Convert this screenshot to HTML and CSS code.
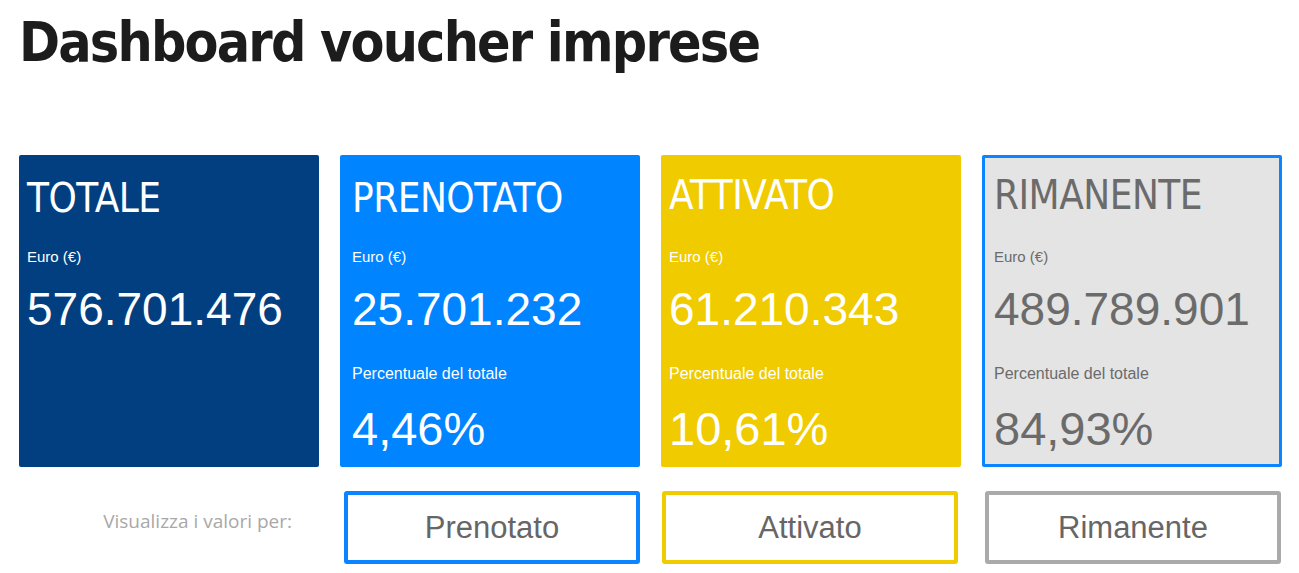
FILE: index.html
```html
<!DOCTYPE html>
<html lang="it">
<head>
<meta charset="utf-8">
<title>Dashboard voucher imprese</title>
<link rel="stylesheet" href="styles.css">
</head>
<body>
<main class="page">
  <h1 class="title">Dashboard voucher imprese</h1>
  <section class="cards">
    <div class="card card-total">
      <div class="card-title">TOTALE</div>
      <div class="card-label">Euro (€)</div>
      <div class="card-value">576.701.476</div>
    </div>
    <div class="card card-booked">
      <div class="card-title">PRENOTATO</div>
      <div class="card-label">Euro (€)</div>
      <div class="card-value">25.701.232</div>
      <div class="card-label card-label-pct">Percentuale del totale</div>
      <div class="card-value card-value-pct">4,46%</div>
    </div>
    <div class="card card-active">
      <div class="card-title">ATTIVATO</div>
      <div class="card-label">Euro (€)</div>
      <div class="card-value">61.210.343</div>
      <div class="card-label card-label-pct">Percentuale del totale</div>
      <div class="card-value card-value-pct">10,61%</div>
    </div>
    <div class="card card-rest">
      <div class="card-title">RIMANENTE</div>
      <div class="card-label">Euro (€)</div>
      <div class="card-value">489.789.901</div>
      <div class="card-label card-label-pct">Percentuale del totale</div>
      <div class="card-value card-value-pct">84,93%</div>
    </div>
  </section>
  <section class="filters">
    <div class="filter-label">Visualizza i valori per:</div>
    <button class="filter-btn btn-booked">Prenotato</button>
    <button class="filter-btn btn-active">Attivato</button>
    <button class="filter-btn btn-rest">Rimanente</button>
  </section>
</main>
</body>
</html>
```

FILE: styles.css
```css
* { box-sizing: border-box; }
html, body { margin: 0; padding: 0; background: #ffffff; }
body { font-family: "Liberation Sans", Arial, sans-serif; color: #1c1c1c; }

.page { padding: 0 0 0 19px; }

.title {
  margin: 0;
  padding-top: 14px;
  font-family: "DejaVu Sans Condensed", "Liberation Sans", sans-serif;
  font-weight: 700;
  font-size: 55px;
  line-height: 56px;
  letter-spacing: -1.8px;
  color: #1c1c1c;
}

.cards {
  margin-top: 85px;
  display: grid;
  grid-template-columns: repeat(4, 300px);
  column-gap: 21px;
}

.card {
  height: 312px;
  border-radius: 2px;
  padding: 23px 8px 0 8px;
  color: #ffffff;
}
.card-total { background: #023f81; }
.card-booked { background: #0084ff; padding-left: 12px; }
.card-active { background: #f0cb00; padding-top: 20px; }
.card-rest {
  background: #e4e4e4;
  border: 3px solid #0a84ff;
  color: #6b6b6b;
  padding: 17px 8px 0 9px;
}

.card-title {
  font-family: "DejaVu Sans Condensed", "Liberation Sans", sans-serif;
  font-size: 40px;
  line-height: 40px;
  letter-spacing: -0.5px;
}
.card-label {
  margin-top: 31px;
  font-size: 15px;
  line-height: 15px;
}
.card-active .card-label, .card-rest .card-label { margin-top: 34px; }
.card-value {
  margin-top: 22px;
  font-size: 46px;
  line-height: 46px;
}
.card-label-pct {
  font-size: 16px;
  line-height: 16px;
}
.card .card-label-pct { margin-top: 34px; }
.card .card-value-pct {
  margin-top: 23px;
  font-size: 47px;
  line-height: 47px;
}

.filters {
  margin-top: 24px;
  display: grid;
  grid-template-columns: repeat(4, 300px);
  column-gap: 21px;
  align-items: center;
}
.filter-label {
  justify-self: end;
  padding-right: 27px;
  font-family: "Open Sans", sans-serif;
  font-size: 19px;
  color: #a8a8a8;
  margin-top: -14px;
}
.filter-btn {
  width: 296px;
  height: 73px;
  background: #ffffff;
  border: 4px solid #aaaaaa;
  border-radius: 3px;
  font-family: "Liberation Sans", sans-serif;
  font-size: 31px;
  color: #666666;
  padding: 0;
  justify-self: end;
}
.btn-booked { border-color: #0a84ff; }
.btn-active { border-color: #f0cb00; justify-self: start; margin-left: 1px; }
.btn-rest { border-color: #aaaaaa; justify-self: start; margin-left: 3px; }
```
